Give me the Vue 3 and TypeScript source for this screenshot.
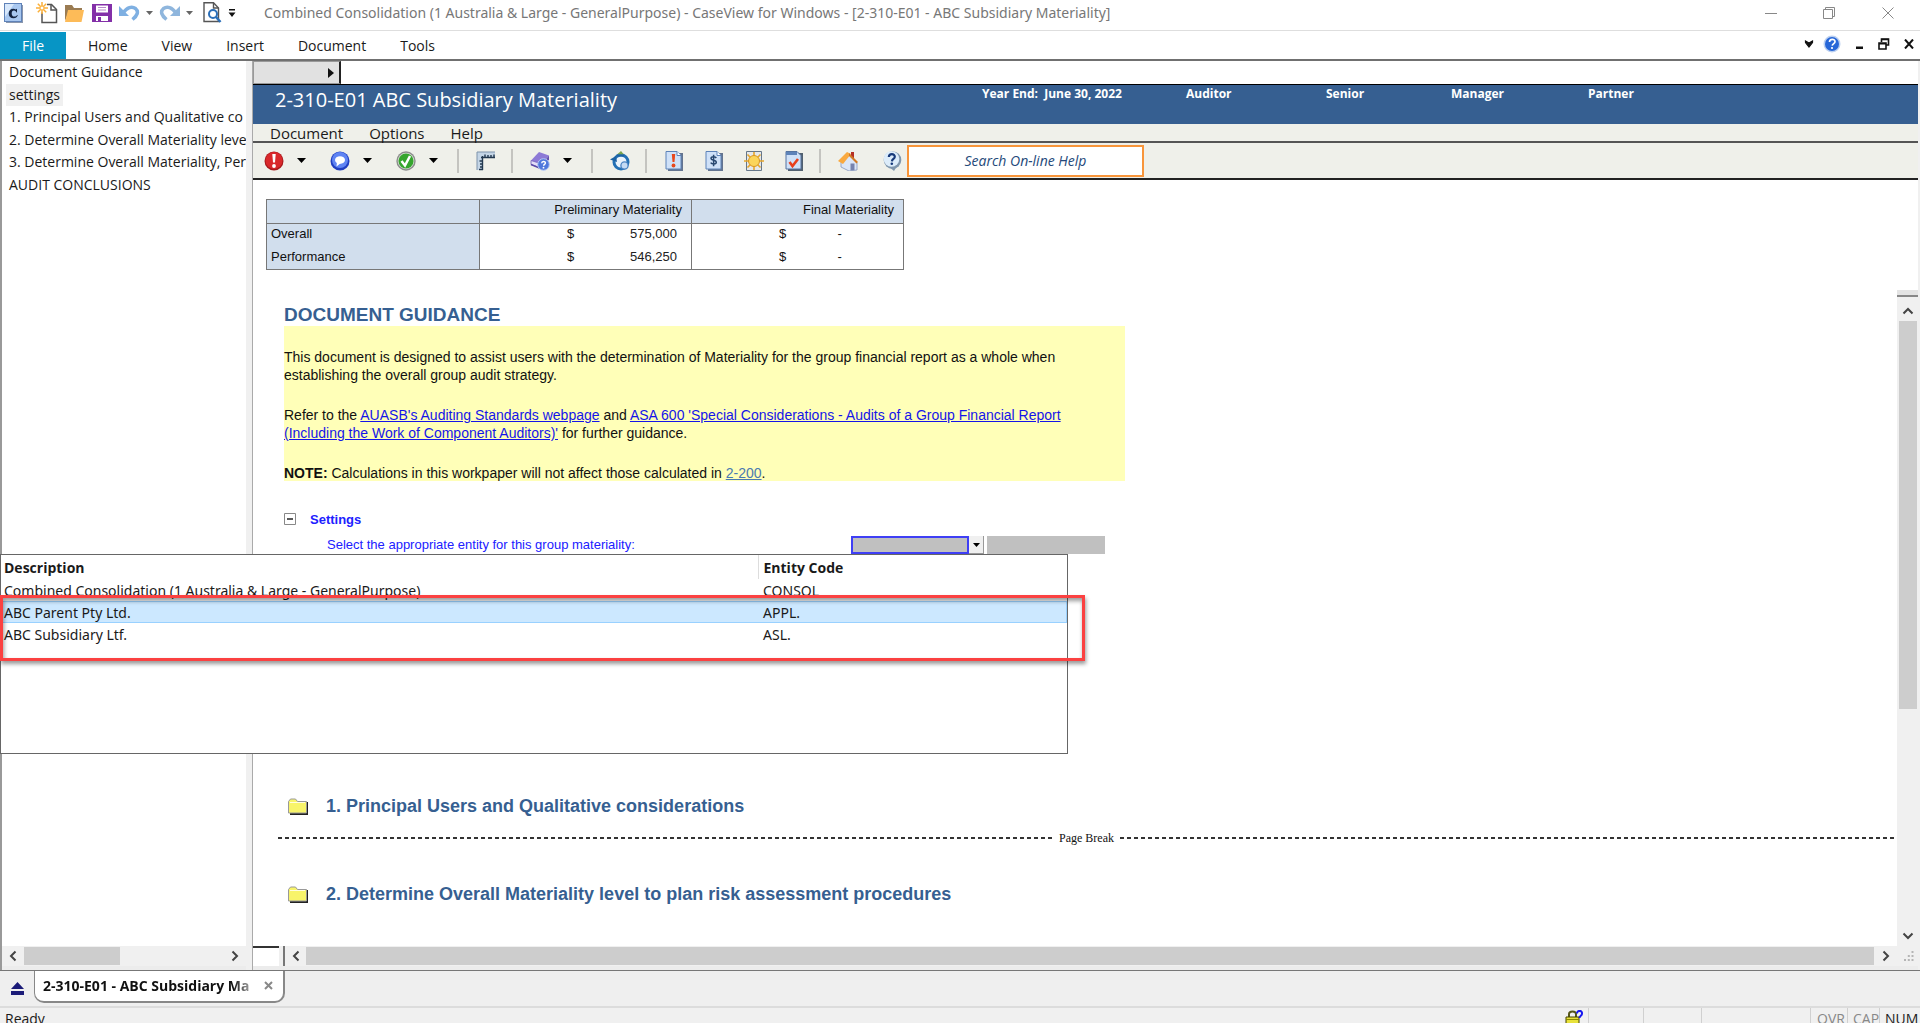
<script setup lang="ts">
import { ref } from 'vue'

interface Entity { description: string; code: string }

const ribbonTabs: string[] = ['Home', 'View', 'Insert', 'Document', 'Tools']
const outline: string[] = [
  'Document Guidance',
  'settings',
  '1. Principal Users and Qualitative co',
  '2. Determine Overall Materiality leve',
  '3. Determine Overall Materiality, Per',
  'AUDIT CONCLUSIONS',
]
const docMenus: string[] = ['Document', 'Options', 'Help']
const meta: string[] = ['Year End:  June 30, 2022', 'Auditor', 'Senior', 'Manager', 'Partner']
const amounts = [
  { label: 'Overall', preliminary: '575,000', final: '-' },
  { label: 'Performance', preliminary: '546,250', final: '-' },
]
const entities: Entity[] = [
  { description: 'Combined Consolidation (1 Australia & Large - GeneralPurpose)', code: 'CONSOL' },
  { description: 'ABC Parent Pty Ltd.', code: 'APPL.' },
  { description: 'ABC Subsidiary Ltf.', code: 'ASL.' },
]
const current = ref('settings')
const highlighted = ref('APPL.')
const entity = ref('')
const query = ref('')
</script>

<template>
  <div class="window">
    <header class="titlebar">
      <div class="quick">
        <svg class="q-app" width="20" height="20" viewBox="0 0 20 20">
          <rect x="2" y="2" width="17" height="18" fill="#8a97ad" />
          <rect x="0.5" y="0.5" width="17" height="18" fill="#a9c8f0" stroke="#5f82b8" />
          <path d="M1 1h9L1 14z" fill="#d8e8fb" />
          <path d="M13 5.800v4.200c-.6-1.800-1.800-2.600-3-2.600-1.600 0-2.300 1.200-2.300 3s1 3.200 2.600 3.200c1.300 0 2.200-.6 2.800-1.700l.7.400c-.8 2-2 3-4.200 3-3 0-4.900-2-4.900-4.800 0-2.800 2-4.700 4.700-4.700 1 0 1.600.2 2.200.6z" fill="#14233f" />
        </svg>
        <svg class="q-new" width="22" height="22" viewBox="0 0 22 22" fill="none">
          <path d="M6 10.500V20.500H20.500V7.500L15.500 2.500H11" stroke="#555" stroke-width="1.500" fill="#fff" />
          <path d="M15 2.500V8H20.500" stroke="#555" stroke-width="1.500" />
          <path d="M6 0v12M0 6h12M1.800 1.800l8.400 8.400M10.200 1.800l-8.400 8.400" stroke="#fbb03a" stroke-width="1.500" />
          <circle cx="6" cy="6" r="2" fill="#fff" stroke="#fbb03a" />
        </svg>
        <svg class="q-open" width="20" height="20" viewBox="0 0 20 20">
          <path d="M1 18V2h7l2 3h8v3H5L1 18z" fill="#9a7b52" />
          <path d="M4 7h16l-2.500 12H1z" fill="#fdbb58" />
        </svg>
        <svg class="q-save" width="20" height="20" viewBox="0 0 20 20">
          <path d="M0 1h20v18H0z" fill="#8330a8" />
          <path d="M4 2.500h12v7H4z" fill="#fff" /><path d="M6 4.500h8M6 7h8" stroke="#b78acb" />
          <path d="M4 13h12v5H4z" fill="#fff" /><path d="M6 14h3v4H6z" fill="#8330a8" />
        </svg>
        <svg class="q-undo" width="21" height="17" viewBox="0 0 21 17" fill="none">
          <path d="M0 2v10h10z" fill="#7fb0e2" />
          <path d="M4 9C8 3 13 2 16.500 4.500c3.500 3 2 7-3 11" stroke="#7fb0e2" stroke-width="3.500" />
        </svg>
        <svg class="q-tri" width="7" height="4" viewBox="0 0 7 4"><path d="M0 0h7L3.500 4z" fill="#666" /></svg>
        <svg class="q-redo" width="21" height="17" viewBox="0 0 21 17" fill="none">
          <path d="M21 2v10H11z" fill="#8fb6dd" />
          <path d="M17 9C13 3 8 2 4.500 4.500c-3.500 3-2 7 3 11" stroke="#8fb6dd" stroke-width="3.500" />
        </svg>
        <svg class="q-tri" width="7" height="4" viewBox="0 0 7 4"><path d="M0 0h7L3.500 4z" fill="#666" /></svg>
        <svg class="q-view" width="19" height="21" viewBox="0 0 19 21" fill="none">
          <path d="M1 .8h9.500L15.500 6v13.500H1z" fill="#fff" stroke="#555" stroke-width="1.400" />
          <path d="M10.500 1v5h5" stroke="#555" stroke-width="1.400" />
          <circle cx="10" cy="12" r="4" fill="#fff" stroke="#2a6eb8" stroke-width="2" />
          <path d="M13 15l4.500 5" stroke="#2a6eb8" stroke-width="2.500" />
        </svg>
        <svg class="q-more" width="8" height="8" viewBox="0 0 8 8"><path d="M1 0h6v1.500H1zM.500 3.500h7L4 8z" fill="#111" /></svg>
      </div>
      <h1 class="title">Combined Consolidation (1 Australia &amp; Large - GeneralPurpose) - CaseView for Windows - [2-310-E01 - ABC Subsidiary Materiality]</h1>
      <div class="win-controls">
        <button aria-label="Minimize"><svg width="12" height="14"><path d="M0 7.500h12" stroke="#888" /></svg></button>
        <button aria-label="Restore"><svg width="13" height="14" fill="none"><path d="M.500 3.500h9v9h-9zM2.500 3V1.500h9v9H10" stroke="#888" /></svg></button>
        <button aria-label="Close"><svg width="12" height="14"><path d="M.500 1.500l11 11M11.500 1.500l-11 11" stroke="#888" /></svg></button>
      </div>
    </header>

    <nav class="ribbon">
      <button class="file">File</button>
      <button v-for="tab in ribbonTabs" :key="tab" class="tab">{{ tab }}</button>
      <div class="mdi">
        <svg width="10" height="8" viewBox="0 0 10 8"><path d="M1.500 1L5 3l3.500-2v1.500L5 7 1.500 2.500z" fill="#111" stroke="#111" stroke-width="1.200" /></svg>
        <svg class="mdi-help" width="18" height="18" viewBox="0 0 18 18">
          <circle cx="9" cy="9" r="8.500" fill="#bcd0f0" /><circle cx="9" cy="9" r="7" fill="#2767d8" />
          <path d="M6.500 7c0-3.500 5.500-3.500 5.500-.300 0 1.900-2.500 1.800-2.800 4" fill="none" stroke="#fff" stroke-width="1.700" /><circle cx="9" cy="13" r="1.100" fill="#fff" />
        </svg>
        <svg width="9" height="12" viewBox="0 0 9 12"><path d="M1 8.500h7v2.500H1z" fill="#111" /></svg>
        <svg width="12" height="12" viewBox="0 0 12 12" fill="none"><path d="M3.500 4V1h7v6H8" stroke="#111" stroke-width="1.600" /><path d="M1 5h7v6H1zM1 5.800h7M3.500 1.500h7" stroke="#111" stroke-width="1.600" /></svg>
        <svg width="10" height="10" viewBox="0 0 10 10"><path d="M1 .500l8 9M9 .500l-8 9" stroke="#111" stroke-width="2" /></svg>
      </div>
    </nav>

    <div class="workspace">
      <aside class="outline">
        <ul>
          <li v-for="item in outline" :key="item">
            <button :class="{ on: item === current }" @click="current = item">{{ item }}</button>
          </li>
        </ul>
        <div class="hscroll">
          <svg class="arrow" width="8" height="12" viewBox="0 0 8 12"><path d="M6.500 1.500L2 6l4.500 4.500" fill="none" stroke="#444" stroke-width="2" /></svg>
          <i class="thumb"></i>
          <svg class="arrow" width="8" height="12" viewBox="0 0 8 12"><path d="M1.500 1.500L6 6l-4.500 4.500" fill="none" stroke="#444" stroke-width="2" /></svg>
        </div>
      </aside>

      <main class="doc">
        <div class="strip"><button class="strip-tab" aria-label="Expand"><svg width="6" height="10" viewBox="0 0 6 10"><path d="M0 0l6 5-6 5z" fill="#111" /></svg></button></div>
        <div class="banner">
          <h2>2-310-E01 ABC Subsidiary Materiality</h2>
          <div class="meta"><span v-for="m in meta" :key="m">{{ m }}</span></div>
        </div>
        <nav class="docmenu"><button v-for="m in docMenus" :key="m">{{ m }}</button></nav>
        <div class="toolbar">
          <button class="tool" aria-label="Flag">
            <svg width="20" height="20" viewBox="0 0 20 20"><circle cx="10" cy="10" r="9.500" fill="#a8191c" /><circle cx="10" cy="9.500" r="8.500" fill="#d9282b" /><path d="M8.300 3h3.400l-.7 8.500H9z" fill="#fff" /><circle cx="10" cy="15" r="1.900" fill="#fff" /></svg>
          </button>
          <svg class="drop" width="9" height="5" viewBox="0 0 9 5"><path d="M0 0h9L4.500 5z" /></svg>
          <button class="tool" aria-label="Note">
            <svg width="20" height="20" viewBox="0 0 20 20"><circle cx="10" cy="10" r="9.500" fill="#203ec0" /><circle cx="10" cy="9" r="8" fill="#5f84f3" /><ellipse cx="10" cy="9" rx="5" ry="3.800" fill="#fff" /><path d="M7 11l-.5 4.500 4.500-3.500z" fill="#fff" /></svg>
          </button>
          <svg class="drop" width="9" height="5" viewBox="0 0 9 5"><path d="M0 0h9L4.500 5z" /></svg>
          <button class="tool" aria-label="Sign off">
            <svg width="20" height="20" viewBox="0 0 20 20"><circle cx="10" cy="10" r="9.700" fill="#8c8c8c" /><circle cx="10" cy="10" r="8.300" fill="#d6ded4" /><circle cx="10" cy="10" r="7.500" fill="#35a52d" /><path d="M5.500 10l3.500 4.500 5-9.500" fill="none" stroke="#fff" stroke-width="2.500" /></svg>
          </button>
          <svg class="drop" width="9" height="5" viewBox="0 0 9 5"><path d="M0 0h9L4.500 5z" /></svg>
          <i class="sep"></i>
          <button class="tool" aria-label="Ruler">
            <svg width="20" height="20" viewBox="0 0 20 20"><path d="M1 1h18v6H7v12H1z" fill="#c4d5e6" /><path d="M1 19V1h18" fill="none" stroke="#7c93ab" /><path d="M5 6.500h14M6.500 5v14M9 3.500v3M12 4v2.500M15 4v2.500M18 3.500v3M3.500 10h3M4 13h2.500M4 16h2.500M3 18.500h4" fill="none" stroke="#22384f" stroke-width="1.400" /></svg>
          </button>
          <i class="sep"></i>
          <button class="tool" aria-label="Reference">
            <svg width="20" height="20" viewBox="0 0 20 20"><path d="M9 1l10 3.500L12 13 1 9.500z" fill="#8d7ad6" /><path d="M1 9.500l11 3.500v4.500L1 13.500z" fill="#e3def8" stroke="#6a58b8" stroke-width=".800" /><path d="M1 13.500l11 4.500" stroke="#5a48a8" stroke-width="1.500" /><path d="M19 4.500v4L12 17.500V13z" fill="#6451b0" /><circle cx="13.500" cy="13.500" r="5.800" fill="#4f78dc" stroke="#b5c8f5" /><path d="M11.700 12.300c0-2.300 3.700-2.300 3.700-.200 0 1.300-1.700 1.300-1.800 2.600" fill="none" stroke="#fff" stroke-width="1.400" /><circle cx="13.500" cy="16.700" r=".900" fill="#fff" /></svg>
          </button>
          <svg class="drop" width="9" height="5" viewBox="0 0 9 5"><path d="M0 0h9L4.500 5z" /></svg>
          <i class="sep"></i>
          <button class="tool" aria-label="Refresh">
            <svg width="20" height="20" viewBox="0 0 20 20"><circle cx="11" cy="11" r="7" fill="#e9f2fb" stroke="#2370b5" stroke-width="3" /><path d="M0 8.500l6-3.500 1 6z" fill="#1c62a4" /><path d="M7 3.500h7L11 0z" fill="#7aa34b" /><path d="M6.500 4.500h7.500" stroke="#1c62a4" stroke-width="2" /><circle cx="14.500" cy="14.500" r="3.600" fill="#c5dbf4" stroke="#4c85c4" stroke-width="1.300" /></svg>
          </button>
          <i class="sep"></i>
          <button class="tool" aria-label="Issues">
            <svg width="20" height="20" viewBox="0 0 20 20"><path d="M4 2h15v18H4z" fill="#64748f" /><path d="M2 .500h11l4 4V18H2z" fill="#cfe1f8" stroke="#5d83b9" /><path d="M13 .500v4h4" fill="#fff" stroke="#5d83b9" /><path d="M7.800 3h3.400l-.7 8h-2z" fill="#e8481c" /><circle cx="9.500" cy="14.500" r="1.900" fill="#e8481c" /></svg>
          </button>
          <button class="tool" aria-label="Amounts">
            <svg width="20" height="20" viewBox="0 0 20 20"><path d="M4 2h15v18H4z" fill="#64748f" /><path d="M2 .500h11l4 4V18H2z" fill="#cfe1f8" stroke="#5d83b9" /><path d="M13 .500v4h4" fill="#fff" stroke="#5d83b9" /><path d="M12.300 7c-1-1.700-5.300-1.700-5.300.5 0 2.300 5.300 1.200 5.300 3.800 0 2.300-4.500 2.300-5.600.4M9.600 3.800v11.400" fill="none" stroke="#27476f" stroke-width="1.500" /></svg>
          </button>
          <button class="tool" aria-label="Highlights">
            <svg width="20" height="20" viewBox="0 0 20 20"><path d="M2.500.500h15v19h-15z" fill="#e5e8ea" stroke="#667789" /><path d="M10 1v18M0 10h20M3.500 3.500l13 13M16.500 3.500l-13 13" stroke="#e6a62c" stroke-width="1.600" /><circle cx="10" cy="10" r="5.500" fill="#fbd55a" stroke="#d99722" /></svg>
          </button>
          <button class="tool" aria-label="Checklist">
            <svg width="20" height="20" viewBox="0 0 20 20"><path d="M4 2h15v18H4z" fill="#52606f" /><path d="M2 .500h11l4 4V18H2z" fill="#cfe1f8" stroke="#5573a0" /><path d="M2 1h11v3H2z" fill="#5d83b9" /><path d="M5.500 11l3 4L14 8" fill="none" stroke="#e8401c" stroke-width="2.600" /></svg>
          </button>
          <i class="sep"></i>
          <button class="tool home" aria-label="Home">
            <svg width="20" height="20" viewBox="0 0 20 20"><path d="M13 1h3v6h-3z" fill="#b53025" /><path d="M3 9l8-6 8 9v7l-8 1-8-4z" fill="#dbe6f8" stroke="#8595bd" stroke-width=".800" /><path d="M0 10L9 1l4 2-8 10z" fill="#f9a940" /><path d="M11 2l9 9-1.500 1.500L11 5z" fill="#d27a24" /><path d="M12.500 12.500h4V19l-4 .500z" fill="#7683ae" /></svg>
          </button>
          <button class="tool ask" aria-label="Help">
            <svg width="20" height="20" viewBox="0 0 20 20"><circle cx="10.500" cy="9" r="8.800" fill="#7f96ad" /><path d="M6 15l6 5 3-5z" fill="#7f96ad" /><circle cx="9.500" cy="8" r="7.800" fill="#dcecfa" /><path d="M6.800 6c.3-3.800 6-3.600 6-.3 0 2.300-2.700 2.200-2.900 4.600" fill="none" stroke="#173a7a" stroke-width="2.200" /><circle cx="9.800" cy="12.800" r="1.300" fill="#173a7a" /></svg>
          </button>
          <input v-model="query" class="search" type="text" placeholder="Search On-line Help" aria-label="Search On-line Help" />
        </div>

        <div class="page">
          <table class="materiality">
            <thead>
              <tr><th></th><th colspan="2">Preliminary Materiality</th><th colspan="2">Final Materiality</th></tr>
            </thead>
            <tbody>
              <tr v-for="row in amounts" :key="row.label">
                <th>{{ row.label }}</th>
                <td class="cur">$</td><td class="num">{{ row.preliminary }}</td>
                <td class="cur">$</td><td class="nil">{{ row.final }}</td>
              </tr>
            </tbody>
          </table>

          <div class="scrollarea">
            <div class="content">
              <h3 class="guide-title">DOCUMENT GUIDANCE</h3>
              <section class="guide">
                <p>This document is designed to assist users with the determination of Materiality for the group financial report as a whole when<br />establishing the overall group audit strategy.</p>
                <p>Refer to the <a href="#">AUASB's Auditing Standards webpage</a> and <a href="#">ASA 600 'Special Considerations - Audits of a Group Financial Report<br />(Including the Work of Component Auditors)'</a> for further guidance.</p>
                <p><b>NOTE:</b> Calculations in this workpaper will not affect those calculated in <a href="#" class="ref">2-200</a>.</p>
              </section>
              <div class="settings">
                <svg width="12" height="12" viewBox="0 0 12 12"><path d="M.500.500h11v11H.500z" fill="#fff" stroke="#888" /><path d="M3 6h6" stroke="#222" stroke-width="1.500" /></svg>
                <strong>Settings</strong>
              </div>
              <div class="picker">
                <label for="entity">Select the appropriate entity for this group materiality:</label>
                <select id="entity" v-model="entity"><option value=""></option><option v-for="e in entities" :key="e.code">{{ e.code }}</option></select>
                <button class="open" aria-label="Open list"><svg width="7" height="4" viewBox="0 0 7 4"><path d="M0 0h7L3.500 4z" /></svg></button>
                <output class="name" for="entity"></output>
              </div>
              <div class="section first">
                <svg width="20" height="17" viewBox="0 0 20 17"><path d="M2 16h17V4" fill="none" stroke="#222" stroke-width="2" /><path d="M.500 15V3.500l2-2.500h5l2 2.500h9V15z" fill="#f8f46a" stroke="#999" /><path d="M2 4.500h15" stroke="#fffde0" /></svg>
                <h3>1. Principal Users and Qualitative considerations</h3>
              </div>
              <div class="break"><i></i><span>Page Break</span><i></i></div>
              <div class="section second">
                <svg width="20" height="17" viewBox="0 0 20 17"><path d="M2 16h17V4" fill="none" stroke="#222" stroke-width="2" /><path d="M.500 15V3.500l2-2.500h5l2 2.500h9V15z" fill="#f8f46a" stroke="#999" /><path d="M2 4.500h15" stroke="#fffde0" /></svg>
                <h3>2. Determine Overall Materiality level to plan risk assessment procedures</h3>
              </div>
              <div class="section third">
                <svg width="20" height="17" viewBox="0 0 20 17"><path d="M.500 15V3.500l2-2.500h5l2 2.500h9V15z" fill="#f8f46a" stroke="#999" /></svg>
              </div>
            </div>
            <div class="vscroll">
              <i class="split"></i>
              <svg width="12" height="8" viewBox="0 0 12 8"><path d="M1.500 6.500L6 2l4.500 4.500" fill="none" stroke="#444" stroke-width="2" /></svg>
              <i class="vthumb"></i>
              <svg class="down" width="12" height="8" viewBox="0 0 12 8"><path d="M1.500 1.500L6 6l4.500-4.500" fill="none" stroke="#444" stroke-width="2" /></svg>
            </div>
          </div>
        </div>
        <div class="docfoot">
          <i class="corner"></i>
          <div class="hscroll wide">
            <svg class="arrow" width="8" height="12" viewBox="0 0 8 12"><path d="M6.500 1.500L2 6l4.500 4.500" fill="none" stroke="#444" stroke-width="2" /></svg>
            <i class="thumb"></i>
            <svg class="arrow" width="8" height="12" viewBox="0 0 8 12"><path d="M1.500 1.500L6 6l-4.500 4.500" fill="none" stroke="#444" stroke-width="2" /></svg>
            <svg class="grip" width="10" height="10" viewBox="0 0 10 10"><path d="M7.500 0h2v2h-2zM7.500 4h2v2h-2zM7.500 8h2v2h-2zM3.800 4h2v2h-2zM3.800 8h2v2h-2zM0 8h2v2H0z" fill="#b5b5b5" /></svg>
          </div>
        </div>
      </main>

      <div class="popup">
        <table>
          <thead><tr><th>Description</th><th>Entity Code</th></tr></thead>
          <tbody>
            <tr v-for="e in entities" :key="e.code" :class="{ sel: e.code === highlighted }" @click="highlighted = e.code">
              <td>{{ e.description }}</td><td>{{ e.code }}</td>
            </tr>
          </tbody>
        </table>
      </div>
      <div class="callout"></div>
    </div>

    <div class="tabbar">
      <svg class="eject" width="13" height="13" viewBox="0 0 13 13"><path d="M6.500 0L13 7H0zM0 9h13v4H0z" fill="#1b1b78" /></svg>
      <div class="filetab">
        <span>2-310-E01 - ABC Subsidiary Ma</span>
        <button aria-label="Close tab"><svg width="9" height="9" viewBox="0 0 9 9"><path d="M1 1l7 7M8 1L1 8" stroke="#888" stroke-width="2" /></svg></button>
      </div>
    </div>
    <footer class="status">
      <span class="ready">Ready</span>
      <svg class="lock" width="18" height="16" viewBox="0 0 18 16"><path d="M4 7V4c0-3.500 7-3.500 7 0v3" fill="none" stroke="#55551a" stroke-width="2" /><path d="M1 7h13v9H1z" fill="#e8e23a" stroke="#444400" /><path d="M1 9.500h13" stroke="#8b8700" /><path d="M12 3.500c0-3.500 5.500-3.500 5 .2 0 2-2.500 2-2.500 4.300" fill="none" stroke="#1717f0" stroke-width="2" /></svg>
      <i class="cell c1"></i><i class="cell c2"></i><i class="cell c3"></i>
      <span class="cell key">OVR</span><span class="cell key cap">CAP</span><span class="cell key num">NUM</span>
    </footer>
  </div>
</template>

<style>
body { margin: 0; background: #fff; }
</style>

<style scoped>
* { box-sizing: border-box; }
button { border: 0; padding: 0; background: none; font: inherit; color: inherit; }
svg { display: block; flex: none; }
h1, h2, h3, p, ul { margin: 0; padding: 0; font-weight: 400; }
.window { display: flex; flex-direction: column; height: 100vh; overflow: hidden; font-family: "Open Sans", "Noto Sans", sans-serif; font-size: 14px; color: #1a1a1a; background: #fff; white-space: nowrap; }

.titlebar { display: flex; align-items: center; flex: none; height: 31px; padding: 0 26px 5px 4px; border-bottom: 1px solid #dedede; }
.quick { display: flex; align-items: center; width: 260px; }
.q-new { margin-left: 12px; }
.q-open { margin-left: 6px; }
.q-save { margin-left: 8px; }
.q-undo { margin-left: 7px; }
.q-tri { margin: 0 6px; }
.q-view { margin-left: 4px; }
.q-more { margin-left: 6px; }
.title { font-family: "Noto Sans", sans-serif; font-size: 14px; line-height: 20px; color: #777; }
.win-controls { display: flex; gap: 46px; margin-left: auto; }

.ribbon { display: flex; align-items: stretch; flex: none; height: 30px; border-bottom: 2px solid #707070; padding-top: 1px; }
.file { width: 66px; margin-right: 5px; background: #0795c5; color: #fff; }
.tab { padding: 0 17px; }
.mdi { display: flex; align-items: center; gap: 14px; margin-left: auto; padding: 0 6px 3px 0; }
.mdi-help { margin-left: -5px; }

.workspace { position: relative; display: flex; flex: 1; min-height: 0; border-bottom: 1px solid #777; }
.outline { display: flex; flex-direction: column; width: 253px; flex: none; border-left: 2px solid #999; border-right: 1px solid #aaa; padding: 0 6px 4px 0; box-shadow: inset -6px 0 #f0f0f0, inset 0 -4px #ececec; }
.outline ul { flex: 1; list-style: none; overflow: hidden; }
.outline li { height: 22px; margin-left: 4px; line-height: 22px; }
.outline li + li { margin-top: 1px; }
.outline li:nth-child(2n+1) { margin-top: 0; }
.outline li button { padding: 0 3px; height: 22px; line-height: 22px; }
.outline li .on { background: #f0f0f0; }
.hscroll { display: flex; align-items: center; height: 20px; padding: 0 7px; background: #f0f0f0; }
.hscroll .thumb { width: 96px; height: 18px; margin-left: 7px; background: #cdcdcd; }
.hscroll .arrow + .thumb + .arrow { margin-left: auto; }

.doc { display: flex; flex-direction: column; flex: 1; min-width: 0; padding-right: 2px; background: #f0f0f0; }
.strip { display: flex; height: 24px; background: #fff; border-bottom: 1px solid #000; flex: none; }
.strip-tab { display: flex; align-items: center; justify-content: flex-end; width: 88px; padding-right: 5px; background: #e1e1e1; border: 1px solid #999; border-right: 2px solid #222; }
.banner { display: flex; justify-content: space-between; height: 39px; flex: none; padding-left: 22px; background: #365f91; color: #fff; }
.banner h2 { font-size: 20px; line-height: 29px; }
.meta { display: grid; grid-template-columns: 204px 140px 125px 137px 330px; font-size: 12px; font-weight: 700; line-height: 17px; }
.meta span { white-space: pre; }
.docmenu { display: flex; gap: 26px; height: 19px; flex: none; padding-left: 17px; background: #eff0ea; border-bottom: 2px solid #555; line-height: 18px; font-size: 15px; }
.toolbar { display: flex; align-items: center; height: 37px; flex: none; padding-left: 11px; background: #eff0ea; border-bottom: 2px solid #222; }
.tool { width: 20px; }
.drop { margin: 0 24px 0 13px; }
.drop:has(+ .sep) { margin-right: 4px; }
.sep { width: 2px; height: 24px; margin: 0 17px 0 15px; background: #c4c4c0; }
.tool + .tool { margin-left: 20px; }
.home + .ask { margin: 0 5px 0 24px; }
.search { width: 237px; height: 32px; padding: 0; border: 2px solid #f8953a; background: #fff; text-align: center; font: italic 14px "Open Sans", sans-serif; }
.search::placeholder { color: #24497a; opacity: 1; }

.page { display: flex; flex-direction: column; flex: 1; min-height: 0; background: #fff; font-family: "Liberation Sans", Arial, sans-serif; font-size: 13px; color: #111; }
.materiality { width: 638px; margin: 19px 0 0 13px; border-collapse: collapse; table-layout: fixed; flex: none; }
.materiality thead tr { height: 24px; }
.materiality tr { height: 23px; }
.materiality th, .materiality td { padding: 0 4px; font-weight: 400; text-align: left; vertical-align: top; line-height: 20px; }
.materiality th { background: #d1deed; border: 1px solid #777; }
.materiality thead th { padding-right: 9px; text-align: right; }
.materiality thead th:first-child { width: 213px; }
.materiality tbody th { border-top: 0; border-bottom: 0; }
.materiality tbody tr:last-child { border-bottom: 1px solid #777; }
.materiality .cur { padding-left: 87px; }
.materiality .num { padding-right: 14px; text-align: right; border-right: 1px solid #777; }
.materiality .nil { padding-left: 40px; border-right: 1px solid #777; }

.scrollarea { display: flex; flex: 1; min-height: 0; padding-top: 20px; }
.content { flex: 1; min-width: 0; padding-left: 25px; overflow: hidden; }
.guide-title { margin: 14px 0 0 6px; font-size: 19px; line-height: 22px; font-weight: 700; color: #365f91; }
.guide { width: 841px; height: 155px; margin-left: 6px; padding-top: 22px; background: #ffffb8; font-size: 14px; line-height: 18px; }
.guide p + p { margin-top: 22px; }
.guide a { color: #1515e8; }
.guide a.ref { color: #4a7ab0; }
.settings { display: flex; align-items: center; gap: 14px; margin: 28px 0 0 6px; height: 20px; color: #2020ff; }
.picker { display: flex; height: 18px; margin: 7px 0 0 49px; color: #2020ff; line-height: 18px; }
.picker label { width: 524px; }
.picker select { width: 118px; height: 18px; appearance: none; border: 2px solid #3f3ff5; border-radius: 0; background: #c0c0c0; }
.open { display: flex; align-items: center; justify-content: center; width: 15px; background: #f0f0f0; border-right: 1px solid #999; border-bottom: 1px solid #999; }
.name { width: 118px; margin-left: 3px; background: #c0c0c0; }
.section { display: flex; align-items: center; gap: 18px; height: 22px; margin-left: 10px; }
.section.first { margin-top: 241px; }
.section.second { margin-top: 35px; }
.section.third { margin-top: 38px; }
.section h3 { font-size: 18px; font-weight: 700; color: #365f91; }
.break { display: flex; align-items: center; gap: 6px; height: 20px; margin-top: 11px; font: 12px "Liberation Serif", serif; }
.break i { flex: 1; height: 2px; background: repeating-linear-gradient(90deg, #333 0 4px, transparent 4px 7px); }
.break i:first-child { flex: none; width: 775px; }
.vscroll { display: flex; flex-direction: column; align-items: center; width: 21px; background: #f0f0f0; }
.split { width: 21px; height: 7px; margin-bottom: 10px; border-bottom: 2px solid #888; background: #e4e4e4; }
.vthumb { width: 18px; height: 388px; margin-top: 6px; background: #cdcdcd; }
.vscroll .down { margin: auto 0 6px; }
.docfoot { display: flex; height: 24px; flex: none; border-bottom: 4px solid #ececec; }
.corner { width: 26px; background: #fff; border-top: 2px solid #333; }
.wide { flex: 1; margin-left: 4px; border-left: 2px solid #777; padding: 0 4px 0 7px; }
.wide .thumb { flex: 1; margin: 0 8px 0 6px; }
.wide .grip { margin-left: 14px; }

.popup { position: absolute; left: 0; top: 493px; width: 1068px; height: 200px; background: #fff; border: 1px solid #666; }
.popup table { width: 100%; border-collapse: collapse; table-layout: fixed; }
.popup th, .popup td { height: 22px; padding: 0 3px; text-align: left; line-height: 21px; }
.popup td { font-family: "Noto Sans", sans-serif; }
.popup th { height: 24px; font-weight: 700; }
.popup th:first-child { width: 757px; border-right: 1px solid #ddd; }
.popup td + td, .popup th + th { padding-left: 5px; }
.popup .sel { background: #cce8ff; outline: 1px solid #99d1ff; outline-offset: -1px; }
.callout { position: absolute; left: 0; top: 534px; width: 1085px; height: 66px; border: 3px solid #fb4141; box-shadow: 1px 3px 4px #0006, inset 1px 3px 4px #0006; pointer-events: none; }

.tabbar { display: flex; align-items: center; flex: none; height: 37px; padding-left: 11px; background: #efefef; border-bottom: 2px solid #dcdcdc; }
.filetab { display: flex; align-items: center; justify-content: space-between; align-self: flex-start; width: 251px; height: 32px; margin-left: 10px; padding: 0 10px 2px 8px; background: #fff; border: solid #888; border-width: 0 2px 2px 1px; border-radius: 0 0 10px 10px; }
.filetab span { width: 216px; overflow: hidden; font-weight: 700; background: linear-gradient(90deg, #111 190px, #ddd 214px); background-clip: text; color: transparent; }
.status { display: flex; flex: none; height: 15px; padding-left: 5px; overflow: hidden; background: #f0f0f0; line-height: 22px; }
.lock { margin: 2px 5px 0 auto; }
.cell { border-left: 1px solid #d0d0d0; height: 22px; }
.c1 { width: 55px; }
.c2 { width: 58px; }
.c3 { width: 109px; }
.key { width: 37px; padding-left: 6px; color: #888; }
.cap { width: 32px; padding-left: 5px; }
.num { width: 41px; padding-left: 5px; color: #222; }
</style>
